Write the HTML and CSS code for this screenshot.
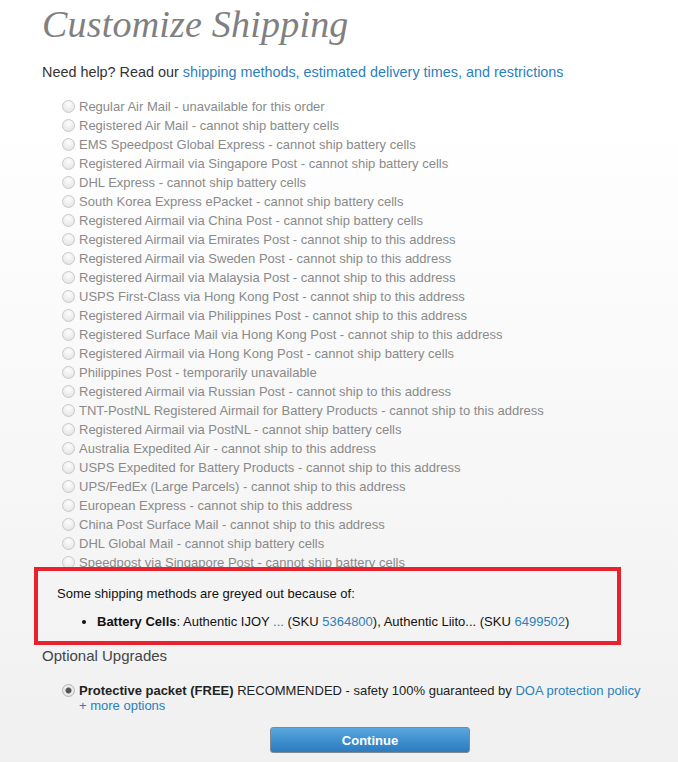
FILE: index.html
```html
<!DOCTYPE html>
<html lang="en">
  <head>
    <meta charset="UTF-8" />
    <title>Customize Shipping</title>
    <link rel="stylesheet" href="styles.css">
  </head>
  <body>
    <div class="page">
      <h1 class="title">Customize Shipping</h1>

      <p class="help">
        Need help? Read our
        <a href="#">shipping methods, estimated delivery times, and restrictions</a>
      </p>

      <ul class="methods">
        <li><span class="radio"></span>Regular Air Mail - unavailable for this order</li>
        <li><span class="radio"></span>Registered Air Mail - cannot ship battery cells</li>
        <li><span class="radio"></span>EMS Speedpost Global Express - cannot ship battery cells</li>
        <li><span class="radio"></span>Registered Airmail via Singapore Post - cannot ship battery cells</li>
        <li><span class="radio"></span>DHL Express - cannot ship battery cells</li>
        <li><span class="radio"></span>South Korea Express ePacket - cannot ship battery cells</li>
        <li><span class="radio"></span>Registered Airmail via China Post - cannot ship battery cells</li>
        <li><span class="radio"></span>Registered Airmail via Emirates Post - cannot ship to this address</li>
        <li><span class="radio"></span>Registered Airmail via Sweden Post - cannot ship to this address</li>
        <li><span class="radio"></span>Registered Airmail via Malaysia Post - cannot ship to this address</li>
        <li><span class="radio"></span>USPS First-Class via Hong Kong Post - cannot ship to this address</li>
        <li><span class="radio"></span>Registered Airmail via Philippines Post - cannot ship to this address</li>
        <li><span class="radio"></span>Registered Surface Mail via Hong Kong Post - cannot ship to this address</li>
        <li><span class="radio"></span>Registered Airmail via Hong Kong Post - cannot ship battery cells</li>
        <li><span class="radio"></span>Philippines Post - temporarily unavailable</li>
        <li><span class="radio"></span>Registered Airmail via Russian Post - cannot ship to this address</li>
        <li><span class="radio"></span>TNT-PostNL Registered Airmail for Battery Products - cannot ship to this address</li>
        <li><span class="radio"></span>Registered Airmail via PostNL - cannot ship battery cells</li>
        <li><span class="radio"></span>Australia Expedited Air - cannot ship to this address</li>
        <li><span class="radio"></span>USPS Expedited for Battery Products - cannot ship to this address</li>
        <li><span class="radio"></span>UPS/FedEx (Large Parcels) - cannot ship to this address</li>
        <li><span class="radio"></span>European Express - cannot ship to this address</li>
        <li><span class="radio"></span>China Post Surface Mail - cannot ship to this address</li>
        <li><span class="radio"></span>DHL Global Mail - cannot ship battery cells</li>
        <li><span class="radio"></span>Speedpost via Singapore Post - cannot ship battery cells</li>
      </ul>

      <div class="notice">
        <p>Some shipping methods are greyed out because of:</p>
        <ul>
          <li>
            <b>Battery Cells</b>: Authentic IJOY <a href="#">...</a> (SKU <a href="#">5364800</a>),
            Authentic Liito... (SKU <a href="#">6499502</a>)
          </li>
        </ul>
      </div>

      <h3 class="upgrades">Optional Upgrades</h3>

      <div class="upgrade">
        <span class="radio checked"></span>
        <div>
          <div class="upgrade-line">
            <b>Protective packet (FREE)</b> RECOMMENDED - safety 100% guaranteed by
            <a href="#">DOA protection policy</a>
          </div>
          <div><a href="#">+ more options</a></div>
        </div>
      </div>

      <div class="actions">
        <button type="button">Continue</button>
      </div>
    </div>
  </body>
</html>
```

FILE: styles.css
```css
html,
body {
  height: 100%;
}

body {
  margin: 0;
  font-family: "Liberation Sans", Arial, sans-serif;
  font-size: 13px;
  color: #222;
  background: linear-gradient(180deg, #ffffff 0%, #ffffff 15%, #f0f0f0 100%);
  overflow: hidden;
}

a {
  color: #2a7fbf;
  text-decoration: none;
}

.page {
  padding: 0 0 0 42px;
}

.title {
  margin: 0;
  font-family: "Liberation Serif", Georgia, serif;
  font-style: italic;
  font-weight: normal;
  font-size: 38px;
  line-height: 48px;
  color: #808080;
  letter-spacing: 0.2px;
}

.help {
  margin: 12px 0 0;
  font-size: 14.4px;
  line-height: 24px;
  color: #333;
}

.methods {
  list-style: none;
  margin: 13px 0 0;
  padding: 0 0 0 20px;
  height: 470px;
  overflow: hidden;
  color: #8a8a8a;
}

.methods li {
  display: flex;
  align-items: center;
  height: 19px;
}

.radio {
  flex: none;
  width: 11px;
  height: 11px;
  margin-right: 4px;
  border: 1px solid #c9c9c9;
  border-radius: 50%;
  background: radial-gradient(circle at 50% 30%, #fdfdfd 0%, #e9e9e9 70%, #dcdcdc 100%);
}

.radio.checked {
  border-color: #b5b5b5;
  background: radial-gradient(circle, #555 0, #555 2.5px, #ececec 3.5px, #e2e2e2 100%);
}

.notice {
  margin: 0 0 0 -8px;
  width: 560px;
  border: 4px solid #e8212c;
  padding: 10px 0 10px 19px;
  color: #111;
}

.notice p {
  margin: 3px 0 0;
  line-height: 19px;
}

.notice ul {
  margin: 9px 0 0;
  padding-left: 40px;
  line-height: 19px;
}

.upgrades {
  margin: 1px 0 0;
  font-size: 15px;
  font-weight: normal;
  line-height: 20px;
  color: #444;
}

.upgrade {
  display: flex;
  align-items: flex-start;
  margin: 17px 0 0 20px;
  line-height: 15px;
}

.upgrade-line {
  white-space: nowrap;
}

.upgrade .radio {
  margin-top: 1px;
}

.actions {
  display: flex;
  margin-top: 14px;
  padding-left: 228px;
}

.actions button {
  width: 200px;
  height: 26px;
  border: 1px solid #7f8a94;
  border-radius: 3px;
  background: linear-gradient(180deg, #5aa8de 0%, #3b8bcb 60%, #2e7bbd 100%);
  color: #fff;
  font-family: "Liberation Sans", Arial, sans-serif;
  font-size: 13px;
  font-weight: bold;
}
```
